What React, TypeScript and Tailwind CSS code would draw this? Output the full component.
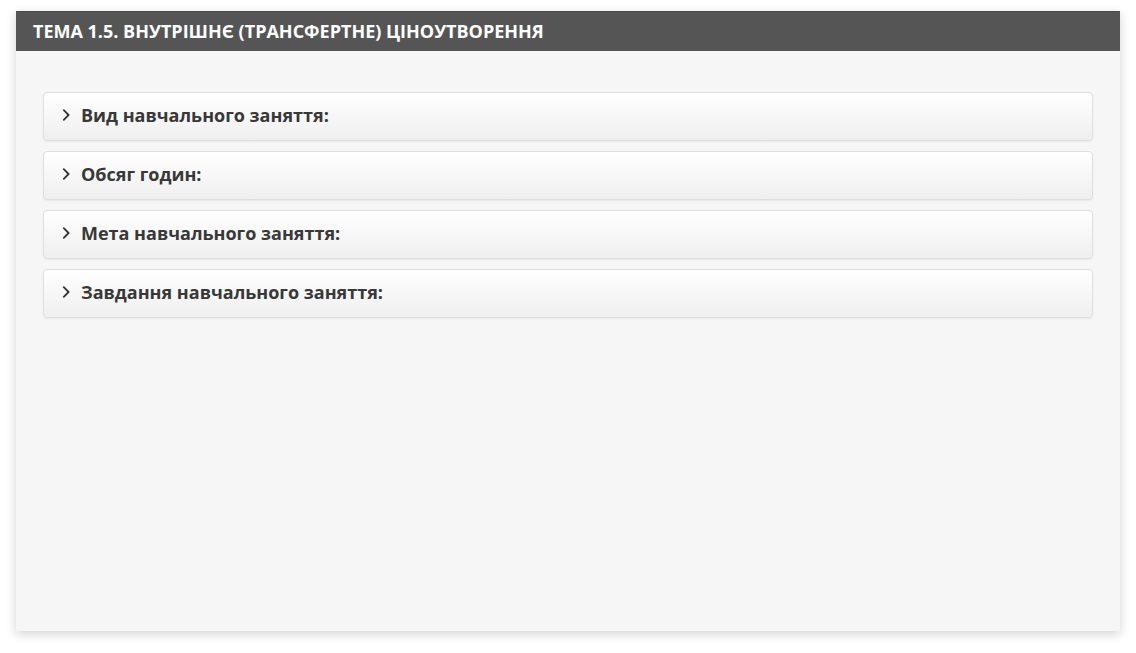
import React from "react";

const items = [
  "Вид навчального заняття:",
  "Обсяг годин:",
  "Мета навчального заняття:",
  "Завдання навчального заняття:",
];

function Chevron() {
  return (
    <svg width="8" height="12" viewBox="0 0 8 12" className="shrink-0">
      <path d="M1.8 1.2 L6.6 6 L1.8 10.8" fill="none" stroke="#333" strokeWidth="1.8" strokeLinecap="round" strokeLinejoin="round" />
    </svg>
  );
}

export default function App() {
  return (
    <div
      className="w-[1136px] h-[653px] bg-white pt-[11px] pl-[16px]"
      style={{ fontFamily: '"Open Sans", "Noto Sans", sans-serif' }}
    >
      <div className="w-[1104px] h-[620px] bg-[#f6f6f6] shadow-[0_3px_10px_rgba(0,0,0,0.18)] flex flex-col">
        <div className="h-[40px] bg-[#555555] flex items-center pl-[17px] pb-[2px] border-t border-[#4a4a4a]">
          <span className="text-white font-bold text-[18px] leading-none">
            ТЕМА 1.5. ВНУТРІШНЄ (ТРАНСФЕРТНЕ) ЦІНОУТВОРЕННЯ
          </span>
        </div>
        <div className="flex flex-col gap-[10px] pt-[41px] px-[27px]">
          {items.map((t) => (
            <div
              key={t}
              className="h-[49px] rounded-[4px] border border-[#dedede] bg-gradient-to-b from-[#ffffff] to-[#efefef] shadow-[0_1px_2px_rgba(0,0,0,0.06)] flex items-center pl-[18px] pb-[3px] gap-[11px]"
            >
              <Chevron />
              <span className="text-[18px] leading-none font-bold text-[#383838]">{t}</span>
            </div>
          ))}
        </div>
      </div>
    </div>
  );
}
